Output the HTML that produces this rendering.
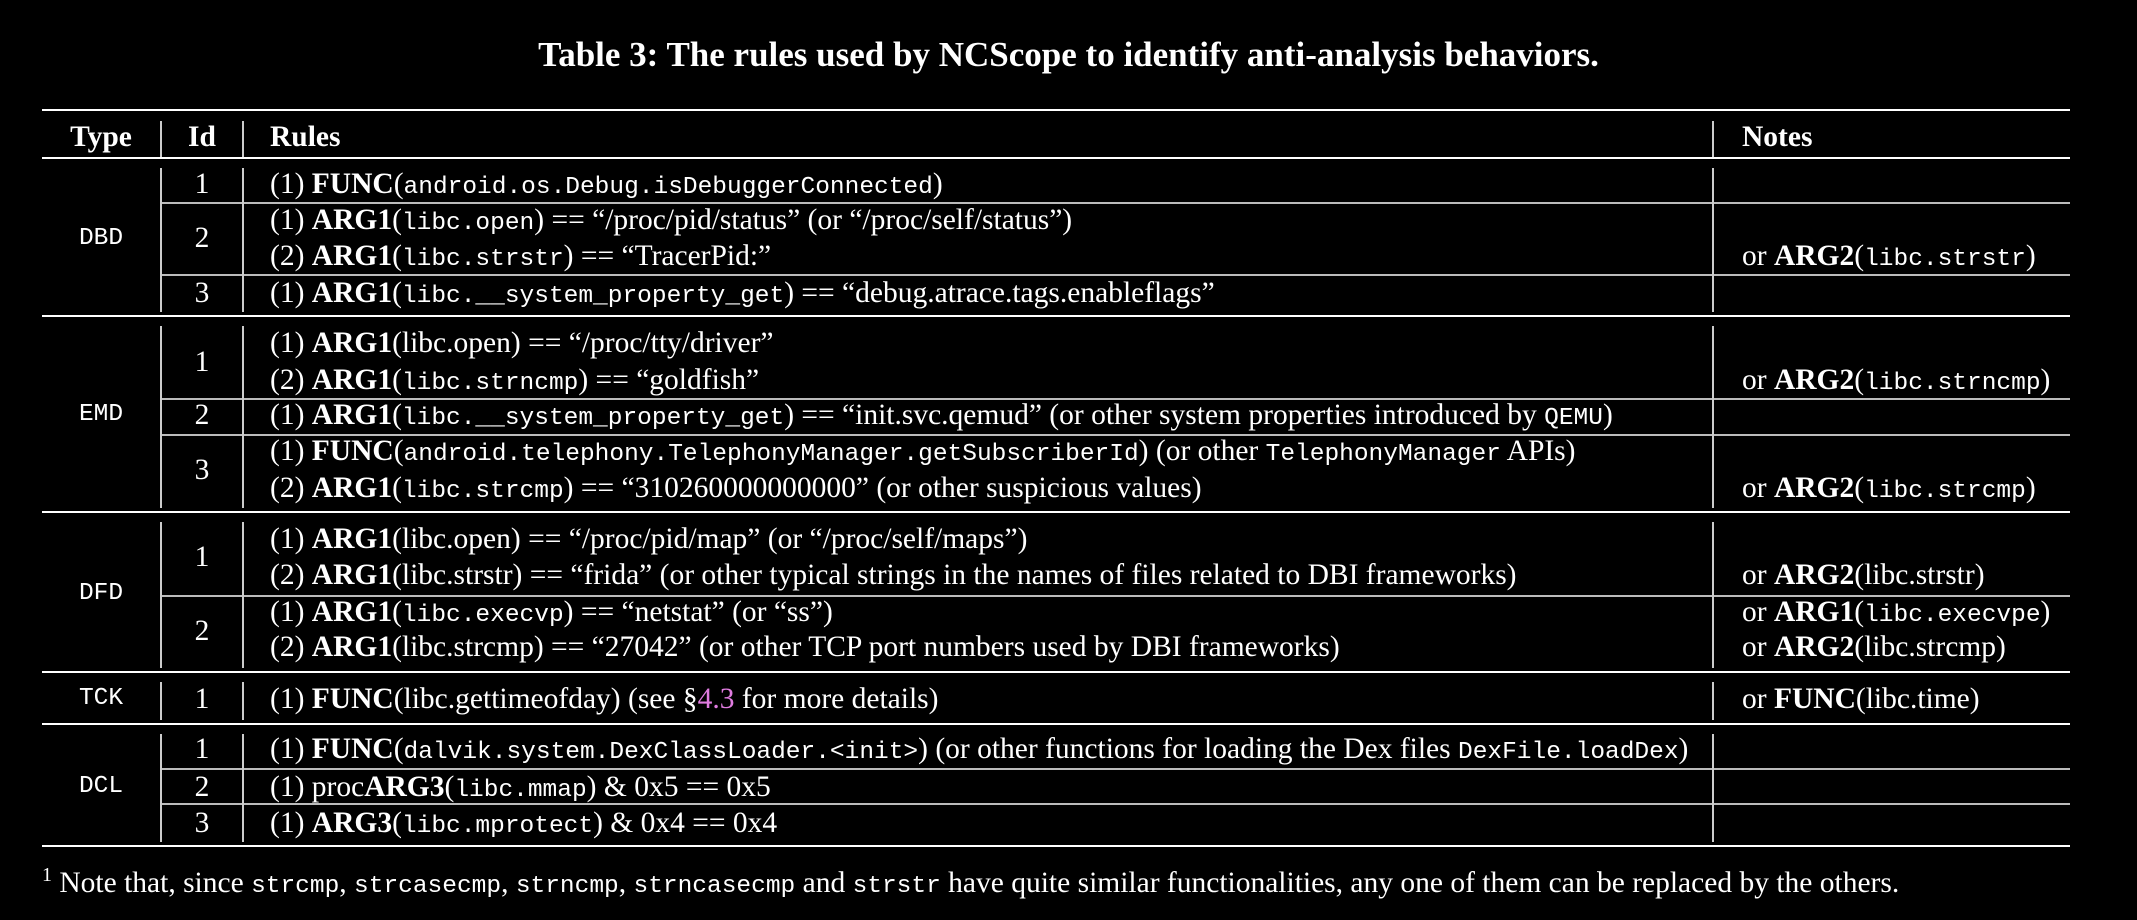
<!DOCTYPE html>
<html><head><meta charset="utf-8"><style>
html,body{margin:0;padding:0;background:#000;}
body{width:2137px;height:920px;position:relative;overflow:hidden;color:#fff;font-family:"Liberation Serif",serif;font-size:29.5px;}
.t{position:absolute;white-space:nowrap;line-height:36px;height:36px;}
.c{transform:translateX(-50%);}
code,.m{font-family:"Liberation Mono",monospace;font-size:24.5px;}
b{font-weight:bold;}
.h{position:absolute;left:42px;width:2028px;height:2px;background:#fff;}
.hs{position:absolute;left:161px;width:1909px;height:2px;background:#bbb;}
.v{position:absolute;width:1.5px;background:#ccc;}
.title{position:absolute;left:0;width:2137px;top:35px;text-align:center;font-weight:bold;font-size:35px;line-height:40px;}
.pk{color:#e07ce0;}
</style></head><body>
<div class="title">Table 3: The rules used by NCScope to identify anti-analysis behaviors.</div>

<div class="h" style="top:109px"></div>
<div class="h" style="top:157px"></div>
<div class="h" style="top:315px"></div>
<div class="h" style="top:511px"></div>
<div class="h" style="top:671px"></div>
<div class="h" style="top:723px"></div>
<div class="h" style="top:845px"></div>

<div class="hs" style="top:202px"></div>
<div class="hs" style="top:274px"></div>
<div class="hs" style="top:398px"></div>
<div class="hs" style="top:434px"></div>
<div class="hs" style="top:595px"></div>
<div class="hs" style="top:768px"></div>
<div class="hs" style="top:803px"></div>

<div class="v" style="left:160px;top:121px;height:36px"></div>
<div class="v" style="left:242px;top:121px;height:36px"></div>
<div class="v" style="left:1712px;top:121px;height:36px"></div>
<div class="v" style="left:160px;top:168px;height:144px"></div>
<div class="v" style="left:242px;top:168px;height:144px"></div>
<div class="v" style="left:1712px;top:168px;height:144px"></div>
<div class="v" style="left:160px;top:326px;height:182px"></div>
<div class="v" style="left:242px;top:326px;height:182px"></div>
<div class="v" style="left:1712px;top:326px;height:182px"></div>
<div class="v" style="left:160px;top:522px;height:146px"></div>
<div class="v" style="left:242px;top:522px;height:146px"></div>
<div class="v" style="left:1712px;top:522px;height:146px"></div>
<div class="v" style="left:160px;top:682px;height:38px"></div>
<div class="v" style="left:242px;top:682px;height:38px"></div>
<div class="v" style="left:1712px;top:682px;height:38px"></div>
<div class="v" style="left:160px;top:734px;height:108px"></div>
<div class="v" style="left:242px;top:734px;height:108px"></div>
<div class="v" style="left:1712px;top:734px;height:108px"></div>

<div class="t c" style="left:101px;top:119px"><b>Type</b></div>
<div class="t c" style="left:202px;top:119px"><b>Id</b></div>
<div class="t" style="left:270px;top:119px"><b>Rules</b></div>
<div class="t" style="left:1742px;top:119px"><b>Notes</b></div>

<div class="t c m" style="left:101px;top:221px">DBD</div>
<div class="t c m" style="left:101px;top:397px">EMD</div>
<div class="t c m" style="left:101px;top:576px">DFD</div>
<div class="t c m" style="left:101px;top:681px">TCK</div>
<div class="t c m" style="left:101px;top:769px">DCL</div>

<div class="t c" style="left:202px;top:166px">1</div>
<div class="t c" style="left:202px;top:220px">2</div>
<div class="t c" style="left:202px;top:275px">3</div>
<div class="t c" style="left:202px;top:344px">1</div>
<div class="t c" style="left:202px;top:397px">2</div>
<div class="t c" style="left:202px;top:452px">3</div>
<div class="t c" style="left:202px;top:539px">1</div>
<div class="t c" style="left:202px;top:613px">2</div>
<div class="t c" style="left:202px;top:681px">1</div>
<div class="t c" style="left:202px;top:731px">1</div>
<div class="t c" style="left:202px;top:769px">2</div>
<div class="t c" style="left:202px;top:805px">3</div>

<div class="t" style="left:270px;top:166px">(1) <b>FUNC</b>(<code>android.os.Debug.isDebuggerConnected</code>)</div>
<div class="t" style="left:270px;top:202px">(1) <b>ARG1</b>(<code>libc.open</code>) == “/proc/pid/status” (or “/proc/self/status”)</div>
<div class="t" style="left:270px;top:238px">(2) <b>ARG1</b>(<code>libc.strstr</code>) == “TracerPid:”</div>
<div class="t" style="left:270px;top:275px">(1) <b>ARG1</b>(<code>libc.__system_property_get</code>) == “debug.atrace.tags.enableflags”</div>

<div class="t" style="left:270px;top:325px">(1) <b>ARG1</b>(libc.open) == “/proc/tty/driver”</div>
<div class="t" style="left:270px;top:362px">(2) <b>ARG1</b>(<code>libc.strncmp</code>) == “goldfish”</div>
<div class="t" style="left:270px;top:397px">(1) <b>ARG1</b>(<code>libc.__system_property_get</code>) == “init.svc.qemud” (or other system properties introduced by <code>QEMU</code>)</div>
<div class="t" style="left:270px;top:433px">(1) <b>FUNC</b>(<code>android.telephony.TelephonyManager.getSubscriberId</code>) (or other <code>TelephonyManager</code> APIs)</div>
<div class="t" style="left:270px;top:470px">(2) <b>ARG1</b>(<code>libc.strcmp</code>) == “310260000000000” (or other suspicious values)</div>

<div class="t" style="left:270px;top:521px">(1) <b>ARG1</b>(libc.open) == “/proc/pid/map” (or “/proc/self/maps”)</div>
<div class="t" style="left:270px;top:557px">(2) <b>ARG1</b>(libc.strstr) == “frida” (or other typical strings in the names of files related to DBI frameworks)</div>
<div class="t" style="left:270px;top:594px">(1) <b>ARG1</b>(<code>libc.execvp</code>) == “netstat” (or “ss”)</div>
<div class="t" style="left:270px;top:629px">(2) <b>ARG1</b>(libc.strcmp) == “27042” (or other TCP port numbers used by DBI frameworks)</div>

<div class="t" style="left:270px;top:681px">(1) <b>FUNC</b>(libc.gettimeofday) (see §<span class="pk">4.3</span> for more details)</div>

<div class="t" style="left:270px;top:731px">(1) <b>FUNC</b>(<code>dalvik.system.DexClassLoader.&lt;init&gt;</code>) (or other functions for loading the Dex files <code>DexFile.loadDex</code>)</div>
<div class="t" style="left:270px;top:769px">(1) proc<b>ARG3</b>(<code>libc.mmap</code>) &amp; 0x5 == 0x5</div>
<div class="t" style="left:270px;top:805px">(1) <b>ARG3</b>(<code>libc.mprotect</code>) &amp; 0x4 == 0x4</div>

<div class="t" style="left:1742px;top:238px">or <b>ARG2</b>(<code>libc.strstr</code>)</div>
<div class="t" style="left:1742px;top:362px">or <b>ARG2</b>(<code>libc.strncmp</code>)</div>
<div class="t" style="left:1742px;top:470px">or <b>ARG2</b>(<code>libc.strcmp</code>)</div>
<div class="t" style="left:1742px;top:557px">or <b>ARG2</b>(libc.strstr)</div>
<div class="t" style="left:1742px;top:594px">or <b>ARG1</b>(<code>libc.execvpe</code>)</div>
<div class="t" style="left:1742px;top:629px">or <b>ARG2</b>(libc.strcmp)</div>
<div class="t" style="left:1742px;top:681px">or <b>FUNC</b>(libc.time)</div>

<div class="t" style="left:42px;top:857px"><sup style="font-size:20px">1</sup> Note that, since <code>strcmp</code>, <code>strcasecmp</code>, <code>strncmp</code>, <code>strncasecmp</code> and <code>strstr</code> have quite similar functionalities, any one of them can be replaced by the others.</div>
</body></html>
